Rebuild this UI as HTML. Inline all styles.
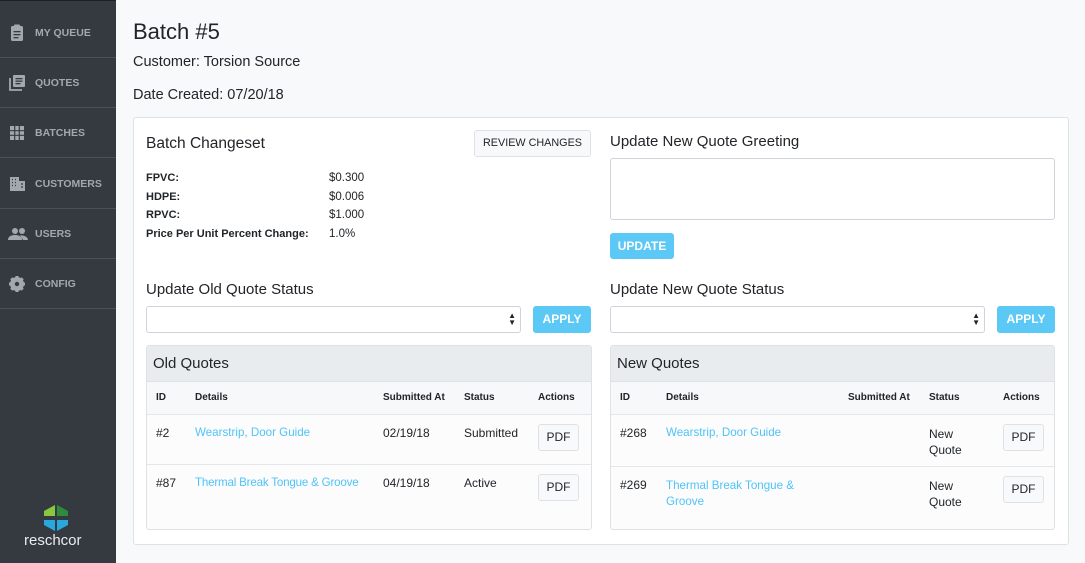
<!DOCTYPE html>
<html><head><meta charset="utf-8"><style>
*{box-sizing:border-box;margin:0;padding:0}
body{width:1085px;height:563px;overflow:hidden;background:#f8f9fa;font-family:"Liberation Sans",sans-serif;color:#212529;position:relative}
.a{position:absolute;white-space:nowrap}
#side{position:absolute;left:0;top:0;width:116px;height:563px;background:#343a40;border-top:1px solid #1d2124}
.item{position:absolute;left:0;width:116px;height:50px;border-bottom:1px solid #4b5157}
.item span{position:absolute;left:35px;top:19px;font-size:10.5px;font-weight:bold;color:#a3a8ad}
.item svg{position:absolute;left:8px;top:16px}
.card{position:absolute;background:#fff;border:1px solid #dfe2e5;border-radius:3px}
.btn{position:absolute;border-radius:3px;font-size:12px;text-align:center}
.light{background:#f8f9fa;border:1px solid #dee2e6;color:#212529}
.info{background:#5bc8f5;color:#fff;font-weight:bold;font-size:12px}
.sel{position:absolute;background:#fff;border:1px solid #ced4da;border-radius:3px}
.th{font-size:10px;font-weight:bold}
.td{font-size:12px}
.lnk{color:#4fc3f7;font-size:11.6px}
</style></head><body>
<div id="side">
 <div class="item" style="top:7px"><svg width="18" height="18" viewBox="0 0 18 18"><rect x="3" y="2" width="12" height="15" rx="1.5" fill="#a3a8ad"/><rect x="6" y="0.5" width="6" height="3" rx="1" fill="#a3a8ad"/><rect x="5.5" y="7" width="7" height="1.3" fill="#343a40"/><rect x="5.5" y="10" width="7" height="1.3" fill="#343a40"/><rect x="5.5" y="13" width="5" height="1.3" fill="#343a40"/></svg><span>MY QUEUE</span></div>
 <div class="item" style="top:57px"><svg width="18" height="18" viewBox="0 0 18 18"><rect x="5" y="1" width="12" height="12" rx="1" fill="#a3a8ad"/><path d="M2 4v12h12" stroke="#a3a8ad" stroke-width="1.8" fill="none"/><rect x="7.5" y="4" width="7" height="1.3" fill="#343a40"/><rect x="7.5" y="6.5" width="7" height="1.3" fill="#343a40"/><rect x="7.5" y="9" width="5" height="1.3" fill="#343a40"/></svg><span>QUOTES</span></div>
 <div class="item" style="top:107px"><svg width="18" height="18" viewBox="0 0 18 18"><rect x="2" y="2" width="14" height="14" fill="#a3a8ad"/><path d="M6.7 2v14M11.3 2v14M2 6.7h14M2 11.3h14" stroke="#343a40" stroke-width="1.2"/></svg><span>BATCHES</span></div>
 <div class="item" style="top:158px"><svg width="18" height="18" viewBox="0 0 18 18"><rect x="2" y="2" width="9" height="14" fill="#a3a8ad"/><rect x="11" y="6" width="6" height="10" fill="#a3a8ad"/><path d="M4 4.5h1M7 4.5h1M4 7.5h1M7 7.5h1M4 10.5h1M7 10.5h1M13 9h2M13 12h2" stroke="#343a40" stroke-width="1.3"/></svg><span>CUSTOMERS</span></div>
 <div class="item" style="top:208px"><svg width="20" height="18" viewBox="0 0 20 18"><circle cx="7" cy="6" r="3" fill="#a3a8ad"/><circle cx="14" cy="6" r="3" fill="#a3a8ad"/><path d="M0 15c0-4 4-5 7-5s7 1 7 5z M12 10.2c3 0 8 1 8 4.8h-5z" fill="#a3a8ad"/></svg><span>USERS</span></div>
 <div class="item" style="top:258px"><svg width="18" height="18" viewBox="0 0 18 18"><circle cx="9" cy="9" r="5.5" fill="none" stroke="#a3a8ad" stroke-width="3"/><path d="M9 1v16M1 9h16M3.3 3.3l11.4 11.4M14.7 3.3L3.3 14.7" stroke="#a3a8ad" stroke-width="3"/><circle cx="9" cy="9" r="2.2" fill="#343a40"/></svg><span>CONFIG</span></div>
 <svg style="position:absolute;left:42px;top:503px" width="28" height="28" viewBox="0 0 28 28"><path d="M13 1L2 7v5h11z" fill="#8cc63f"/><path d="M15 1l11 6v5H15z" fill="#2e8b3e"/><path d="M13 27L2 21v-5h11z" fill="#29a8e0"/><path d="M15 27l11-6v-5H15z" fill="#29a8e0"/></svg>
 <div class="a" style="left:24px;top:531px;font-size:15px;color:#e9ecef">reschcor</div>
</div>

<div class="a" style="left:133px;top:19px;font-size:22px">Batch #5</div>
<div class="a" style="left:133px;top:54px;font-size:14.5px">Customer: Torsion Source</div>
<div class="a" style="left:133px;top:87px;font-size:14.5px">Date Created: 07/20/18</div>

<div class="card" style="left:133px;top:117px;width:936px;height:428px"></div>

<div class="a" style="left:146px;top:135px;font-size:15.5px">Batch Changeset</div>
<div class="btn light" style="left:474px;top:130px;width:117px;height:27px;line-height:25px;font-size:10.8px">REVIEW CHANGES</div>
<div class="a" style="left:146px;top:169px;font-size:11px;font-weight:bold;line-height:18.5px">FPVC:<br>HDPE:<br>RPVC:<br>Price Per Unit Percent Change:</div>
<div class="a" style="left:329px;top:169px;font-size:11.5px;line-height:18.5px">$0.300<br>$0.006<br>$1.000<br>1.0%</div>

<div class="a" style="left:146px;top:281px;font-size:15px">Update Old Quote Status</div>
<div class="sel" style="left:146px;top:306px;width:375px;height:27px"><span class="a" style="right:4px;top:5px;font-size:8px;line-height:7px">▲<br>▼</span></div>
<div class="btn info" style="left:533px;top:306px;width:58px;height:27px;line-height:27px">APPLY</div>

<div class="card" style="left:146px;top:345px;width:446px;height:185px;background:#fcfcfd;overflow:hidden">
 <div style="height:36px;background:#e9ecef;border-bottom:1px solid #dfe2e5"></div>
 <div style="height:33px;background:#f7f8f9;border-bottom:1px solid #e4e7ea"></div>
 <div style="height:50px;border-bottom:1px solid #e4e7ea"></div>
</div>
<div class="a" style="left:153px;top:355px;font-size:15px">Old Quotes</div>
<div class="a th" style="left:156px;top:392px">ID</div>
<div class="a th" style="left:195px;top:392px">Details</div>
<div class="a th" style="left:383px;top:392px">Submitted At</div>
<div class="a th" style="left:464px;top:392px">Status</div>
<div class="a th" style="left:538px;top:392px">Actions</div>
<div class="a td" style="left:156px;top:426px">#2</div>
<div class="a td lnk" style="left:195px;top:426px">Wearstrip, Door Guide</div>
<div class="a td" style="left:383px;top:426px">02/19/18</div>
<div class="a td" style="left:464px;top:426px">Submitted</div>
<div class="btn light" style="left:538px;top:424px;width:41px;height:27px;line-height:25px">PDF</div>
<div class="a td" style="left:156px;top:476px">#87</div>
<div class="a td lnk" style="left:195px;top:476px;letter-spacing:-.2px">Thermal Break Tongue &amp; Groove</div>
<div class="a td" style="left:383px;top:476px">04/19/18</div>
<div class="a td" style="left:464px;top:476px">Active</div>
<div class="btn light" style="left:538px;top:474px;width:41px;height:27px;line-height:25px">PDF</div>

<div class="a" style="left:610px;top:133px;font-size:15px">Update New Quote Greeting</div>
<div class="sel" style="left:610px;top:158px;width:445px;height:62px"></div>
<div class="btn info" style="left:610px;top:233px;width:64px;height:26px;line-height:26px">UPDATE</div>

<div class="a" style="left:610px;top:281px;font-size:15px">Update New Quote Status</div>
<div class="sel" style="left:610px;top:306px;width:375px;height:27px"><span class="a" style="right:4px;top:5px;font-size:8px;line-height:7px">▲<br>▼</span></div>
<div class="btn info" style="left:997px;top:306px;width:58px;height:27px;line-height:27px">APPLY</div>

<div class="card" style="left:610px;top:345px;width:445px;height:185px;background:#fcfcfd;overflow:hidden">
 <div style="height:36px;background:#e9ecef;border-bottom:1px solid #dfe2e5"></div>
 <div style="height:33px;background:#f7f8f9;border-bottom:1px solid #e4e7ea"></div>
 <div style="height:52px;border-bottom:1px solid #e4e7ea"></div>
</div>
<div class="a" style="left:617px;top:355px;font-size:15px">New Quotes</div>
<div class="a th" style="left:620px;top:392px">ID</div>
<div class="a th" style="left:666px;top:392px">Details</div>
<div class="a th" style="left:848px;top:392px">Submitted At</div>
<div class="a th" style="left:929px;top:392px">Status</div>
<div class="a th" style="left:1003px;top:392px">Actions</div>
<div class="a td" style="left:620px;top:426px">#268</div>
<div class="a td lnk" style="left:666px;top:426px">Wearstrip, Door Guide</div>
<div class="a td" style="left:929px;top:426px;line-height:16px">New<br>Quote</div>
<div class="btn light" style="left:1003px;top:424px;width:41px;height:27px;line-height:25px">PDF</div>
<div class="a td" style="left:620px;top:478px">#269</div>
<div class="a td lnk" style="left:666px;top:478px;line-height:16px">Thermal Break Tongue &amp;<br>Groove</div>
<div class="a td" style="left:929px;top:478px;line-height:16px">New<br>Quote</div>
<div class="btn light" style="left:1003px;top:476px;width:41px;height:27px;line-height:25px">PDF</div>
</body></html>
